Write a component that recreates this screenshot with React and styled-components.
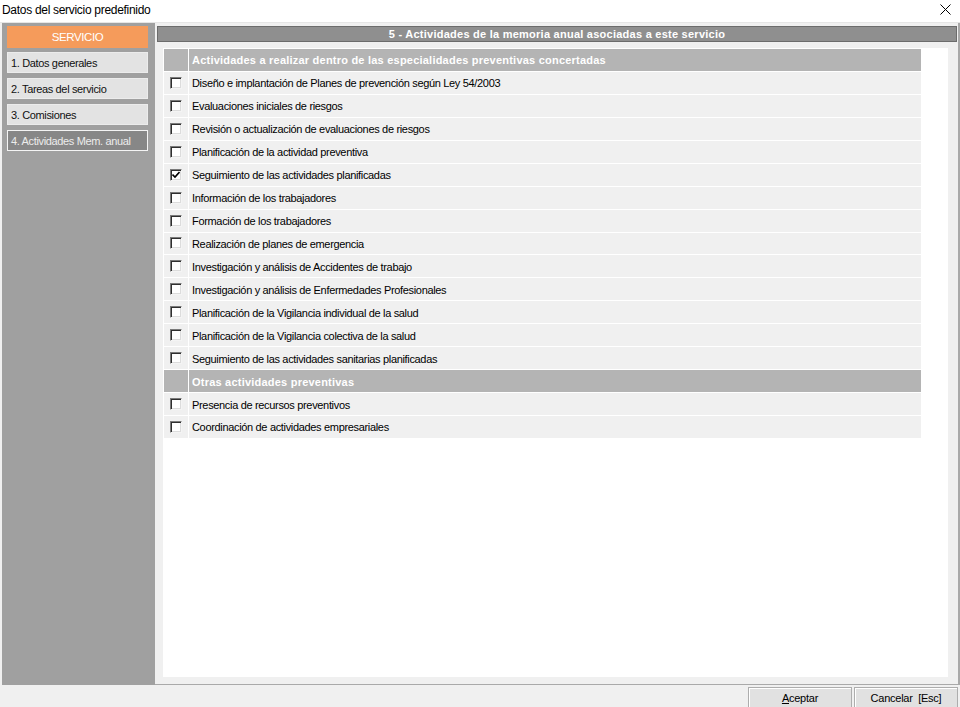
import React from "react";
import styled, { createGlobalStyle } from "styled-components";

const Global = createGlobalStyle`
  html, body { margin: 0; padding: 0; background: #ffffff; }
  body { font-family: "Liberation Sans", Arial, sans-serif; }
  * { box-sizing: border-box; }
`;

const Window = styled.div`
  width: 960px;
  height: 707px;
  display: flex;
  flex-direction: column;
  overflow: hidden;
  background: #ffffff;
  font-family: "Liberation Sans", Arial, sans-serif;
`;

const TitleBar = styled.div`
  height: 23px;
  display: flex;
  align-items: center;
  justify-content: space-between;
  padding: 0 8px 3px 2px;
  background: #ffffff;
  border-bottom: 1px solid #e6e6e6;
`;

const Title = styled.span`
  font-size: 12px;
  letter-spacing: -0.3px;
  color: #000000;
`;

const CloseButton = styled.button`
  border: none;
  background: transparent;
  padding: 0;
  width: 14px;
  height: 14px;
  display: flex;
  align-items: center;
  justify-content: center;
`;

const Main = styled.div`
  flex: 1;
  display: flex;
  min-height: 0;
  border-left: 2px solid #f0f0f0;
`;

const Sidebar = styled.div`
  width: 153px;
  background: #a0a0a0;
  padding: 3px 7px 0 5px;
  display: flex;
  flex-direction: column;
  gap: 5px;
`;

const ServiceTitle = styled.div`
  height: 22px;
  margin-bottom: -1px;
  background: #f59b5b;
  color: #ffffff;
  font-size: 11.5px;
  letter-spacing: -0.4px;
  display: flex;
  align-items: center;
  justify-content: center;
`;

const NavItem = styled.div`
  height: 21px;
  display: flex;
  align-items: center;
  padding-left: 3px;
  font-size: 11px;
  letter-spacing: -0.35px;
  background: ${(p) => (p.$active ? "#878787" : "#e3e3e3")};
  color: ${(p) => (p.$active ? "#ececec" : "#111111")};
  border: 1px solid ${(p) => (p.$active ? "#f4f4f4" : "#ececec")};
`;

const Panel = styled.div`
  flex: 1;
  display: flex;
  flex-direction: column;
  background: #f0f0f0;
  padding: 3px 1px 7px 2px;
  border-right: 2px solid #a9a9a9;
  border-bottom: 1px solid #a9a9a9;
`;

const PanelHeader = styled.div`
  height: 16px;
  background: #8f8f8f;
  border: 1px solid #6c6c6c;
  color: #ffffff;
  font-size: 11px;
  font-weight: bold;
  letter-spacing: 0.25px;
  display: flex;
  align-items: center;
  justify-content: center;
`;

const Sheet = styled.div`
  flex: 1;
  margin: 6px 9px 0 6px;
  background: #ffffff;
  padding: 1px 0 0 1px;
`;

const Table = styled.div`
  width: 757px;
  display: flex;
  flex-direction: column;
`;

const Row = styled.div`
  height: 22.95px;
  display: grid;
  grid-template-columns: 24px 1fr;
  column-gap: 1px;
  border-bottom: 1px solid #ffffff;
`;

const Cell = styled.div`
  background: ${(p) => (p.$header ? "#b4b4b4" : "#f0f0f0")};
  display: flex;
  align-items: center;
  justify-content: ${(p) => (p.$center ? "center" : "flex-start")};
  padding-left: ${(p) => (p.$center ? "0" : "3px")};
  padding-top: 1px;
  font-size: 11px;
  font-weight: ${(p) => (p.$header ? "bold" : "normal")};
  letter-spacing: ${(p) => (p.$header ? "0.22px" : "-0.33px")};
  color: ${(p) => (p.$header ? "#ffffff" : "#000000")};
  white-space: nowrap;
`;

const Box = styled.span`
  width: 12px;
  height: 12px;
  margin-left: -1px;
  margin-top: -1px;
  background: #ffffff;
  border: 1px solid;
  border-color: #7a7a7a #f4f4f4 #f4f4f4 #7a7a7a;
  box-shadow: inset 1px 1px 0 #2f2f2f, inset -1px -1px 0 #dcdcdc;
  display: flex;
  align-items: center;
  justify-content: center;
`;

const Footer = styled.div`
  height: 22px;
  background: #f0f0f0;
  display: flex;
  justify-content: flex-end;
  padding: 2px 2px 0 0;
  gap: 2px;
`;

const Button = styled.button`
  width: 104px;
  height: 22px;
  background: #e1e1e1;
  border: 1px solid #adadad;
  border-bottom: none;
  box-shadow: inset 1px 1px 0 #ffffff;
  font-family: "Liberation Sans", Arial, sans-serif;
  font-size: 11px;
  letter-spacing: -0.25px;
  color: #000000;
  padding: 0 0 2px 0;
  u { text-decoration: underline; }
`;

const Checkbox = ({ checked }) => (
  <Box>
    {checked && (
      <svg width="8" height="8" viewBox="0 0 8 8">
        <path d="M0.5 3.5 L3 6 L7.5 1" fill="none" stroke="#000" strokeWidth="1.6" />
      </svg>
    )}
  </Box>
);

const group1 = [
  "Diseño e implantación de Planes de prevención según Ley 54/2003",
  "Evaluaciones iniciales de riesgos",
  "Revisión o actualización de evaluaciones de riesgos",
  "Planificación de la actividad preventiva",
  "Seguimiento de las actividades planificadas",
  "Información de los trabajadores",
  "Formación de los trabajadores",
  "Realización de planes de emergencia",
  "Investigación y análisis de Accidentes de trabajo",
  "Investigación y análisis de Enfermedades Profesionales",
  "Planificación de la Vigilancia individual de la salud",
  "Planificación de la Vigilancia colectiva de la salud",
  "Seguimiento de las actividades sanitarias planificadas",
];

const group2 = [
  "Presencia de recursos preventivos",
  "Coordinación de actividades empresariales",
];

const checkedItems = new Set(["Seguimiento de las actividades planificadas"]);

const Section = ({ title, items }) => (
  <>
    <Row>
      <Cell $header />
      <Cell $header>{title}</Cell>
    </Row>
    {items.map((t) => (
      <Row key={t}>
        <Cell $center>
          <Checkbox checked={checkedItems.has(t)} />
        </Cell>
        <Cell>{t}</Cell>
      </Row>
    ))}
  </>
);

export default function App() {
  return (
    <Window>
      <Global />
      <TitleBar>
        <Title>Datos del servicio predefinido</Title>
        <CloseButton aria-label="Cerrar">
          <svg width="11" height="11" viewBox="0 0 11 11">
            <path d="M0.5 0.5 L10.5 10.5 M10.5 0.5 L0.5 10.5" stroke="#000" strokeWidth="1" />
          </svg>
        </CloseButton>
      </TitleBar>
      <Main>
        <Sidebar>
          <ServiceTitle>SERVICIO</ServiceTitle>
          <NavItem>1. Datos generales</NavItem>
          <NavItem>2. Tareas del servicio</NavItem>
          <NavItem>3. Comisiones</NavItem>
          <NavItem $active>4. Actividades Mem. anual</NavItem>
        </Sidebar>
        <Panel>
          <PanelHeader>5 - Actividades de la memoria anual asociadas a este servicio</PanelHeader>
          <Sheet>
            <Table>
              <Section
                title="Actividades a realizar dentro de las especialidades preventivas concertadas"
                items={group1}
              />
              <Section title="Otras actividades preventivas" items={group2} />
            </Table>
          </Sheet>
        </Panel>
      </Main>
      <Footer>
        <Button>
          <u>A</u>ceptar
        </Button>
        <Button>Cancelar&nbsp;&nbsp;[Esc]</Button>
      </Footer>
    </Window>
  );
}
